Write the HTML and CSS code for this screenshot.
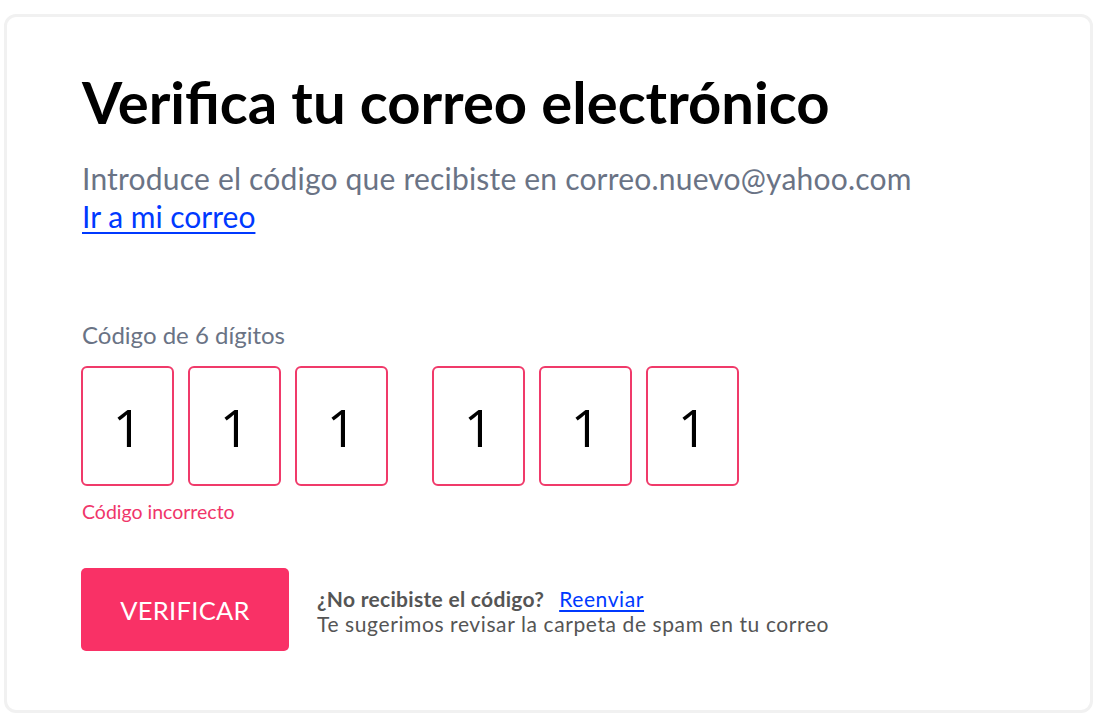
FILE: index.html
```html
<!DOCTYPE html>
<html lang="es">
<head>
<meta charset="utf-8">
<title>Verifica tu correo electrónico</title>
<link rel="stylesheet" href="styles.css">
</head>
<body>
<main class="card">
  <h1 class="title">Verifica tu correo electrónico</h1>
  <p class="subtitle">Introduce el código que recibiste en correo.nuevo@yahoo.com</p>
  <a class="mail-link" href="#">Ir a mi correo</a>

  <div class="code-field">
    <label class="code-label">Código de 6 dígitos</label>
    <div class="code-boxes">
      <div class="group">
        <div class="digit">1</div>
        <div class="digit">1</div>
        <div class="digit">1</div>
      </div>
      <div class="group">
        <div class="digit">1</div>
        <div class="digit">1</div>
        <div class="digit">1</div>
      </div>
    </div>
    <p class="error">Código incorrecto</p>
  </div>

  <div class="actions">
    <button class="verify">VERIFICAR</button>
    <div class="resend">
      <p class="resend-q"><span class="q">¿No recibiste el código?</span><a class="resend-link" href="#">Reenviar</a></p>
      <p class="hint">Te sugerimos revisar la carpeta de spam en tu correo</p>
    </div>
  </div>
</main>
</body>
</html>
```
FILE: styles.css
```css
* { box-sizing: border-box; }
html, body { margin: 0; padding: 0; background: #ffffff; }
body {
  font-family: "Lato", "Noto Sans", sans-serif;
  padding: 14px 8px 10px 4px;
}
.card {
  width: 1089px;
  height: 699px;
  border: 3px solid #f1f1f1;
  border-radius: 12px;
  padding: 53px 0 0 75px;
}
.title {
  margin: 0;
  font-family: "Lato", sans-serif;
  font-weight: 700;
  font-size: 58px;
  line-height: 64px;
  color: #000;
}
.subtitle {
  margin: 25px 0 0;
  font-size: 30px;
  line-height: 38px;
  color: #6a7385;
  letter-spacing: 0.2px;
}
.mail-link {
  display: inline-block;
  font-size: 30px;
  line-height: 38px;
  color: #0039ff;
  text-decoration: underline;
  text-underline-offset: 4px;
  text-decoration-thickness: 2px;
}
.code-field { margin-top: 86px; }
.code-label {
  display: block;
  font-size: 24px;
  line-height: 28px;
  color: #6a7385;
}
.code-boxes {
  display: flex;
  gap: 44px;
  margin-top: 17px;
  margin-left: -1px;
}
.group { display: flex; gap: 14px; }
.digit {
  width: 93px;
  height: 120px;
  border: 2px solid #f03a6a;
  border-radius: 6px;
  display: flex;
  align-items: center;
  justify-content: center;
  font-family: "Open Sans", sans-serif;
  font-size: 52px;
  color: #000;
}
.error {
  margin: 14px 0 0;
  font-size: 19.5px;
  line-height: 24px;
  color: #f0356a;
}
.actions {
  display: flex;
  align-items: flex-start;
  margin-top: 44px;
  margin-left: -1px;
}
.verify {
  width: 208px;
  height: 83px;
  border: none;
  border-radius: 5px;
  background: #f93166;
  color: #fff;
  font-family: "Lato", sans-serif;
  font-size: 25.5px;
  letter-spacing: 0.3px;
}
.resend { margin: 18px 0 0 28px; }
.resend p { margin: 0; line-height: 25px; }
.resend-q { font-size: 21px; color: #555; }
.q { font-weight: 700; color: #555; letter-spacing: 0.3px; }
.resend-link {
  margin-left: 15px;
  color: #0039ff;
  text-decoration: underline;
  text-underline-offset: 3px;
  letter-spacing: 0.6px;
}
.hint { font-size: 21px; color: #555; letter-spacing: 0.6px; }
```
